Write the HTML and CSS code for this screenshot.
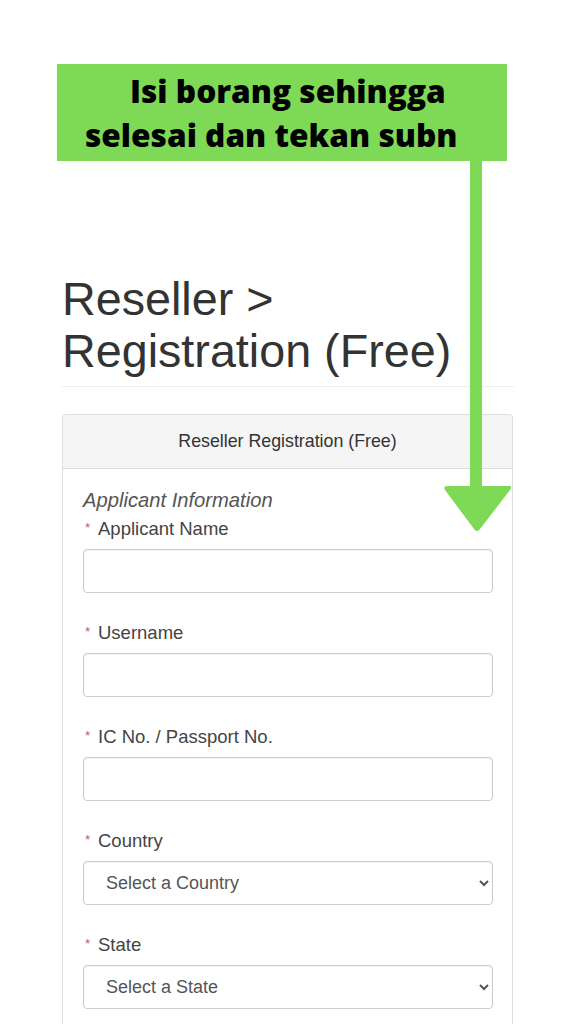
FILE: index.html
```html
<!DOCTYPE html>
<html lang="ms">
<head>
<meta charset="utf-8">
<title>Reseller Registration (Free)</title>
<link rel="stylesheet" href="styles.css">
</head>
<body>
<div class="callout">
  <div class="callout-line l1">Isi borang sehingga</div>
  <div class="callout-line l2">selesai dan tekan subn</div>
</div>
<svg class="arrow" width="70" height="372" viewBox="0 0 70 372">
  <rect x="27" y="0" width="12" height="332" fill="#7ed957"/>
  <path d="M4 326 L66 326 Q70 326 67 330 L37 369 Q34 373 31 369 L2 330 Q0 326 4 326 Z" fill="#7ed957"/>
</svg>
<main class="page">
  <h1 class="title">Reseller &gt;<br>Registration (Free)</h1>
  <hr class="rule">
  <section class="panel">
    <div class="panel-head">Reseller Registration (Free)</div>
    <div class="panel-body">
      <div class="legend">Applicant Information</div>
      <div class="field">
        <label class="label"><span class="req">*</span>Applicant Name</label>
        <input class="control" type="text">
      </div>
      <div class="field">
        <label class="label"><span class="req">*</span>Username</label>
        <input class="control" type="text">
      </div>
      <div class="field">
        <label class="label"><span class="req">*</span>IC No. / Passport No.</label>
        <input class="control" type="text">
      </div>
      <div class="field">
        <label class="label"><span class="req">*</span>Country</label>
        <select class="control select"><option>Select a Country</option></select>
      </div>
      <div class="field">
        <label class="label"><span class="req">*</span>State</label>
        <select class="control select"><option>Select a State</option></select>
      </div>
    </div>
  </section>
</main>
</body>
</html>
```
FILE: styles.css
```css
html, body {
  margin: 0;
  padding: 0;
  background: #ffffff;
  height: 1024px;
  overflow: hidden;
}
body {
  font-family: "Liberation Sans", Arial, sans-serif;
  color: #333;
}
.callout {
  position: absolute;
  left: 57px;
  top: 64px;
  width: 450px;
  height: 97px;
  background: #7ed957;
  box-sizing: border-box;
  padding-top: 5px;
  font-family: "Open Sans", sans-serif;
  font-weight: 800;
  font-size: 31.6px;
  line-height: 44px;
  color: #000;
}
.callout-line.l1 { padding-left: 73px; }
.callout-line.l2 { padding-left: 28px; }
.arrow {
  position: absolute;
  left: 443px;
  top: 160px;
}
.page {
  padding: 273px 62px 0 62px;
}
.title {
  margin: 0;
  font-weight: 400;
  font-size: 46.7px;
  line-height: 52px;
  color: #333;
}
.rule {
  margin: 9px 0 0 0;
  border: 0;
  border-top: 1px solid #eee;
}
.panel {
  margin-top: 27px;
  border: 1px solid #ddd;
  border-radius: 4px;
  width: 451px;
  box-sizing: border-box;
}
.panel-head {
  height: 53px;
  background: #f5f5f5;
  border-bottom: 1px solid #ddd;
  border-radius: 4px 4px 0 0;
  display: flex;
  align-items: center;
  justify-content: center;
  font-size: 17.8px;
  color: #333;
}
.panel-body {
  padding: 20px 20px 40px 20px;
}
.legend {
  font-style: italic;
  font-size: 20.2px;
  line-height: 22px;
  color: #555;
  margin-bottom: 8px;
}
.field {
  display: flex;
  flex-direction: column;
  gap: 10px;
  margin-bottom: 30px;
}
.label {
  font-size: 18.5px;
  line-height: 20px;
  color: #444;
}
.req {
  display: inline-block;
  width: 15px;
  padding-left: 2px;
  box-sizing: border-box;
  color: #b5655b;
  font-size: 13px;
  line-height: 0;
  vertical-align: 3px;
}
.control {
  box-sizing: border-box;
  width: 410px;
  height: 44px;
  border: 1px solid #ccc;
  border-radius: 4px;
  background: #fff;
  box-shadow: inset 0 1px 1px rgba(0,0,0,0.05);
  font-family: "Liberation Sans", Arial, sans-serif;
  font-size: 18px;
  color: #555;
  margin: 0;
}
.select {
  padding: 0 16px 0 18px;
}
```
